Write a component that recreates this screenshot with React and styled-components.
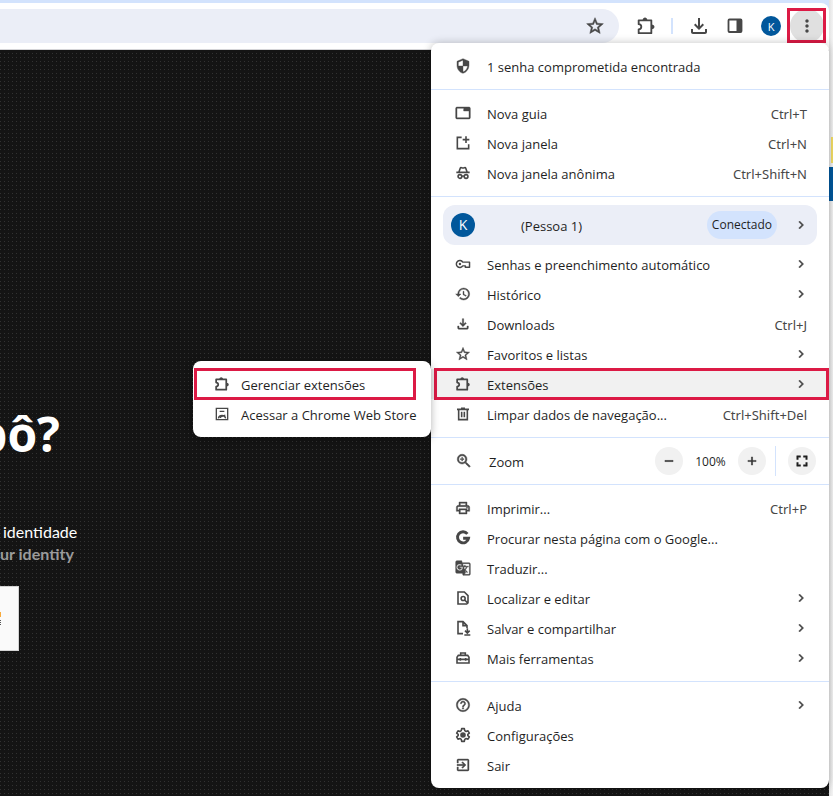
import React from "react";
import styled, { createGlobalStyle, css } from "styled-components";
import {
  MdSecurity,
  MdTab,
  MdHistory,
  MdOutlineFileDownload,
  MdStarBorder,
  MdZoomIn,
  MdOutlinePrint,
  MdGTranslate,
  MdHelpOutline,
  MdExitToApp,
  MdChevronRight,
  MdFullscreen,
  MdAdd,
  MdRemove,
  MdMoreVert,
} from "react-icons/md";

const ink = "#474747";
const marker = "#dc1a45";
const line = "#d3e3fd";

const GlobalStyle = createGlobalStyle`
  * { box-sizing: border-box; }
  body {
    margin: 0;
    font-family: "Open Sans", "Noto Sans", sans-serif;
    background: #fff;
    overflow: hidden;
  }
  button { font: inherit; color: inherit; border: 0; padding: 0; background: none; cursor: pointer; }
  ul { list-style: none; margin: 0; padding: 0; }
  svg { display: block; flex: none; }
  svg path[fill="none"] { stroke: none; }
`;

/* ---------- icons ---------- */

const Stroke = ({ size = 16, width = 2.4, children }) => (
  <svg width={size} height={size} viewBox="0 0 24 24" fill="none" stroke="currentColor" strokeWidth={width} aria-hidden="true">
    {children}
  </svg>
);

const PuzzleIcon = ({ size = 16, width = 2.6 }) => (
  <Stroke size={size} width={width}>
    <path d="M3.2 5.2H18.4V20.6H3.2V16C7.4 15.6 7.4 10.2 3.2 9.8Z" strokeLinejoin="round" />
    <path d="M8 5C8 .8 13.6.8 13.6 5ZM18.5 10.2C23.4 10.2 23.4 15.8 18.5 15.8Z" fill="currentColor" stroke="none" />
  </Stroke>
);

const NewWindowIcon = () => (
  <Stroke>
    <path d="M10 3.5H3.5V20.5H20.5V14M16.5 2V12M11.5 7H21.5" />
  </Stroke>
);

const IncognitoIcon = () => (
  <Stroke>
    <path d="M2 11H22M6 10L8 4.5C8.6 3 10 4.4 12 4.4S15.4 3 16 4.5L18 10M10.5 17Q12 16 13.5 17" />
    <circle cx="7.4" cy="17.2" r="2.8" />
    <circle cx="16.6" cy="17.2" r="2.8" />
  </Stroke>
);

const KeyIcon = () => (
  <Stroke width={2.2}>
    <path d="M11.6 9.2A5.2 5.2 0 1 0 11.6 14.8H15.5V17H21.8V9.2Z" strokeLinejoin="round" />
    <circle cx="7.4" cy="12" r="1.8" fill="currentColor" stroke="none" />
  </Stroke>
);

const TrashIcon = () => (
  <Stroke>
    <path d="M3 5H21M9 3.5H15M5.5 5V20.5H18.5V5M10 8.5V17M14 8.5V17" />
  </Stroke>
);

const GoogleIcon = () => (
  <Stroke width={4.4}>
    <path d="M18.6 5.8A8.3 8.3 0 1 0 20.3 12.3H12.2" />
  </Stroke>
);

const FindIcon = () => (
  <Stroke>
    <path d="M19.5 20V8.5L14 3H4.5V21H18.5M14.5 15L20 20.5" />
    <circle cx="12.2" cy="12.8" r="3" />
  </Stroke>
);

const SaveIcon = () => (
  <Stroke>
    <path d="M12 20.5H4.5V2.5H12L18 8.5V12M12 3V8.5H18" />
    <path d="M18.5 12.5V19M15 16L18.5 19.5L22 16M14 22.5H23" />
  </Stroke>
);

const ToolboxIcon = () => (
  <Stroke>
    <path d="M3 19.5V11L5 8H19L21 11V19.5ZM8.5 8V4.5H15.5V8M3 14H21M8 12V16M16 12V16" />
  </Stroke>
);

const GearIcon = () => (
  <Stroke>
    <path
      strokeLinejoin="round"
      d="M10 2.5H14L14.6 5.5L16.6 6.7L19.5 5.7L21.5 9.2L19.2 11.1V12.9L21.5 14.8L19.5 18.3L16.6 17.3L14.6 18.5L14 21.5H10L9.4 18.5L7.4 17.3L4.5 18.3L2.5 14.8L4.8 12.9V11.1L2.5 9.2L4.5 5.7L7.4 6.7L9.4 5.5Z"
    />
    <circle cx="12" cy="12" r="3" fill="currentColor" />
  </Stroke>
);

const StoreIcon = () => (
  <Stroke width={2}>
    <path d="M3.5 3.5H20.5V20.5H3.5ZM8.5 8H15.5" />
    <path d="M6.5 18.5A5.7 5.7 0 0 1 17.5 18.5M9.5 18A3 3 0 0 1 12 15.5L17 13.5" />
  </Stroke>
);

const PanelIcon = () => (
  <svg width="20" height="20" viewBox="0 0 20 20" aria-hidden="true">
    <rect x="3.5" y="3.5" width="13" height="12.5" rx="1" fill="none" stroke="currentColor" strokeWidth="1.8" />
    <path d="M11.5 3.5H16.5V16H11.5Z" fill="currentColor" />
  </svg>
);

/* ---------- browser frame ---------- */

const Desktop = styled.div`
  display: grid;
  grid-template-columns: minmax(0, 1fr) 4px;
  min-height: 100vh;
`;

const BrowserWindow = styled.div`
  position: relative;
  display: flex;
  flex-direction: column;
  background: ${line};
  padding-top: 3px;
`;

const Toolbar = styled.header`
  display: flex;
  align-items: flex-start;
  height: 47px;
  padding: 6px 5px 0 0;
  background: #fff;
  border-bottom: 1px solid #d5d5d8;
  border-radius: 0 8px 0 0;
  color: ${ink};
`;

const AddressBar = styled.div`
  flex: 1;
  display: flex;
  align-items: center;
  justify-content: flex-end;
  height: 34px;
  padding-right: 14px;
  background: #ebeef7;
  border-radius: 0 17px 17px 0;
  svg { stroke-width: 0.6; }
`;

const ToolbarActions = styled.div`
  display: flex;
  align-items: center;
  height: 34px;
  padding-left: 17px;
`;

const ToolButton = styled.button`
  display: grid;
  place-items: center;
  width: ${(p) => p.$size || 20}px;
  height: ${(p) => p.$size || 20}px;
  margin-right: ${(p) => p.$gap || 0}px;
`;

const ToolbarRule = styled.span`
  width: 2px;
  height: 16px;
  margin-right: 14px;
  background: ${line};
`;

const Avatar = styled.span`
  display: grid;
  place-items: center;
  flex: none;
  width: ${(p) => p.$size}px;
  height: ${(p) => p.$size}px;
  border-radius: 50%;
  background: #01579b;
  color: #fff;
  font-size: ${(p) => (p.$size > 20 ? 14 : 11)}px;
  line-height: 1;
`;

const markedStyle = css`
  position: relative;
  &::after {
    content: "";
    position: absolute;
    border: 3px solid ${marker};
    pointer-events: none;
  }
`;

const MenuButton = styled.button`
  ${markedStyle}
  display: grid;
  place-items: center;
  width: 34px;
  height: 34px;
  border-radius: 50%;
  background: #e0e0e0;
  &::after { inset: -1px -2px 0 -3px; }
`;

/* ---------- page behind the menu ---------- */

const Page = styled.main`
  flex: 1;
  display: flex;
  flex-direction: column;
  align-items: flex-start;
  padding-top: 350px;
  background: conic-gradient(from 270deg at 1px 1px, #323232 90deg, #141414 0) 0 3px / 4px 4px;
  overflow: hidden;
`;

const Title = styled.h1`
  display: flex;
  justify-content: flex-end;
  width: 60px;
  margin: 0 0 53px;
  overflow: hidden;
  color: #fff;
  font: 700 48px/68px "Open Sans", sans-serif;
`;

const Lead = styled.p`
  margin: 0;
  padding-left: ${(p) => (p.$muted ? 0 : 3)}px;
  color: ${(p) => (p.$muted ? "#9b9b9b" : "#fff")};
  font: ${(p) => (p.$muted ? 700 : 400)} 16px/22px Lato, sans-serif;
`;

const Captcha = styled.div`
  display: flex;
  align-items: center;
  width: 19px;
  height: 65px;
  margin-top: 21px;
  background: #fafafa;
  border: 1px solid #d3d3d3;
  border-left: 0;
`;

const SideStrip = styled.aside`
  display: flex;
  flex-direction: column;
  align-items: flex-end;
  padding-top: 137px;
  background: linear-gradient(90deg, #e2e2e2, #f4f4f4);
`;

const StripBlock = styled.span`
  width: ${(p) => p.$width}px;
  height: ${(p) => p.$height}px;
  margin-bottom: 4px;
  background: ${(p) => p.$color};
`;

/* ---------- menu ---------- */

const panel = css`
  position: absolute;
  background: #fff;
  border-radius: 8px;
  color: #1f1f1f;
  font-size: 13px;
  line-height: 20px;
  svg:not([fill="none"]) { stroke-width: 0.6; }
`;

const Menu = styled.nav`
  ${panel}
  top: 43px;
  right: 0;
  width: 398px;
  box-shadow: 0 0 8px rgba(0, 0, 0, 0.24);
`;

const Section = styled.ul`
  padding: 8px 0;
  & + & { border-top: 1px solid ${line}; }
`;

const Entry = styled.li`
  position: relative;
`;

const Row = styled.button`
  display: flex;
  align-items: center;
  gap: 16px;
  width: 100%;
  height: 30px;
  padding: 0 20px 0 24px;
  text-align: left;
  background: ${(p) => (p.$active ? "#f1f1f1" : "none")};
  > svg { color: ${ink}; }
  ${(p) => p.$active && markedStyle}
  &::after { inset: -1px 0 -1px 3px; }
`;

const Label = styled.span`
  flex: 1;
  padding-top: 2px;
  white-space: nowrap;
`;

const Shortcut = styled.kbd`
  padding: 2px 2px 0 0;
  color: ${ink};
  font-family: "Noto Sans", sans-serif;
`;

const Submenu = styled.ul`
  ${panel}
  top: -8px;
  right: 100%;
  width: 238px;
  padding: 8px 0;
  box-shadow: 0 2px 8px rgba(0, 0, 0, 0.3);
`;

const SubRow = styled(Row)`
  gap: 11px;
  padding: 0 16px 0 21px;
  background: none;
  &::after { inset: -1px 15px -1px 1px; }
`;

const Profile = styled.button`
  display: flex;
  align-items: center;
  width: calc(100% - 24px);
  height: 40px;
  margin: 0 12px 4px;
  padding: 0 8px;
  border-radius: 12px;
  background: #ebeef7;
  text-align: left;
  > svg { color: ${ink}; }
`;

const ProfileName = styled(Label)`
  padding-left: 46px;
`;

const Badge = styled.span`
  margin-right: 16px;
  padding: 0 5px;
  border-radius: 14px;
  background: ${line};
  font-size: 12px;
  line-height: 28px;
`;

const ZoomRow = styled.li`
  display: flex;
  align-items: center;
  height: 30px;
  padding: 0 13px 0 24px;
  gap: 16px;
  > svg { color: ${ink}; }
`;

const ZoomControls = styled.div`
  display: flex;
  align-items: center;
`;

const RoundButton = styled.button`
  display: grid;
  place-items: center;
  width: 28px;
  height: 28px;
  border-radius: 50%;
  background: #f1f1f1;
`;

const ZoomValue = styled.output`
  width: 55px;
  padding-top: 2px;
  text-align: center;
  font-size: 12px;
`;

const ZoomRule = styled.span`
  width: 1px;
  height: 30px;
  margin: 0 12px 0 9px;
  background: ${line};
`;

const Chevron = () => <MdChevronRight size={16} />;

const MenuRow = ({ icon, label, shortcut, more, active, children }) => (
  <Entry>
    <Row type="button" $active={active} aria-haspopup={more ? "menu" : undefined}>
      {icon}
      <Label>{label}</Label>
      {shortcut && <Shortcut>{shortcut}</Shortcut>}
      {more && <Chevron />}
    </Row>
    {children}
  </Entry>
);

export default function App() {
  return (
    <>
      <GlobalStyle />
      <Desktop>
        <BrowserWindow>
          <Toolbar>
            <AddressBar>
              <ToolButton aria-label="Favoritar"><MdStarBorder size={20} /></ToolButton>
            </AddressBar>
            <ToolbarActions>
              <ToolButton $gap={15} aria-label="Extensões"><PuzzleIcon size={20} width={2.2} /></ToolButton>
              <ToolbarRule />
              <ToolButton $size={24} $gap={14} aria-label="Downloads"><MdOutlineFileDownload size={24} /></ToolButton>
              <ToolButton $gap={16} aria-label="Painel lateral"><PanelIcon /></ToolButton>
              <ToolButton $gap={9} aria-label="Perfil"><Avatar $size={20}>K</Avatar></ToolButton>
              <MenuButton aria-label="Menu"><MdMoreVert size={20} /></MenuButton>
            </ToolbarActions>
          </Toolbar>
          <Page>
            <Title>bô?</Title>
            <Lead>identidade</Lead>
            <Lead $muted>ur identity</Lead>
            <Captcha>
              <svg width="2" height="18" viewBox="0 0 2 18" aria-hidden="true">
                <path d="M0 2H1V7H0Z" fill="#f9ab3c" />
                <path d="M0 10H1V11H0ZM0 12H1V13H0ZM0 14H1V15H0Z" fill="#555" />
              </svg>
            </Captcha>
          </Page>
          <Menu aria-label="Menu principal">
            <Section>
              <MenuRow icon={<MdSecurity size={16} />} label="1 senha comprometida encontrada" />
            </Section>
            <Section>
              <MenuRow icon={<MdTab size={16} />} label="Nova guia" shortcut="Ctrl+T" />
              <MenuRow icon={<NewWindowIcon />} label="Nova janela" shortcut="Ctrl+N" />
              <MenuRow icon={<IncognitoIcon />} label="Nova janela anônima" shortcut="Ctrl+Shift+N" />
            </Section>
            <Section>
              <Entry>
                <Profile type="button">
                  <Avatar $size={24}>K</Avatar>
                  <ProfileName>(Pessoa 1)</ProfileName>
                  <Badge>Conectado</Badge>
                  <Chevron />
                </Profile>
              </Entry>
              <MenuRow icon={<KeyIcon />} label="Senhas e preenchimento automático" more />
              <MenuRow icon={<MdHistory size={16} />} label="Histórico" more />
              <MenuRow icon={<MdOutlineFileDownload size={16} />} label="Downloads" shortcut="Ctrl+J" />
              <MenuRow icon={<MdStarBorder size={16} />} label="Favoritos e listas" more />
              <MenuRow icon={<PuzzleIcon />} label="Extensões" more active>
                <Submenu>
                  <Entry>
                    <SubRow type="button" $active><PuzzleIcon /><Label>Gerenciar extensões</Label></SubRow>
                  </Entry>
                  <Entry>
                    <SubRow type="button"><StoreIcon /><Label>Acessar a Chrome Web Store</Label></SubRow>
                  </Entry>
                </Submenu>
              </MenuRow>
              <MenuRow icon={<TrashIcon />} label="Limpar dados de navegação..." shortcut="Ctrl+Shift+Del" />
            </Section>
            <Section>
              <ZoomRow>
                <MdZoomIn size={18} />
                <Label>Zoom</Label>
                <ZoomControls>
                  <RoundButton type="button" aria-label="Diminuir zoom"><MdRemove size={14} /></RoundButton>
                  <ZoomValue>100%</ZoomValue>
                  <RoundButton type="button" aria-label="Aumentar zoom"><MdAdd size={14} /></RoundButton>
                  <ZoomRule />
                  <RoundButton type="button" aria-label="Tela cheia"><MdFullscreen size={18} /></RoundButton>
                </ZoomControls>
              </ZoomRow>
            </Section>
            <Section>
              <MenuRow icon={<MdOutlinePrint size={16} />} label="Imprimir..." shortcut="Ctrl+P" />
              <MenuRow icon={<GoogleIcon />} label="Procurar nesta página com o Google..." />
              <MenuRow icon={<MdGTranslate size={16} />} label="Traduzir..." />
              <MenuRow icon={<FindIcon />} label="Localizar e editar" more />
              <MenuRow icon={<SaveIcon />} label="Salvar e compartilhar" more />
              <MenuRow icon={<ToolboxIcon />} label="Mais ferramentas" more />
            </Section>
            <Section>
              <MenuRow icon={<MdHelpOutline size={16} />} label="Ajuda" more />
              <MenuRow icon={<GearIcon />} label="Configurações" />
              <MenuRow icon={<MdExitToApp size={16} />} label="Sair" />
            </Section>
          </Menu>
        </BrowserWindow>
        <SideStrip>
          <StripBlock $width={2} $height={26} $color="#f2dc63" />
          <StripBlock $width={4} $height={34} $color="#01579b" />
        </SideStrip>
      </Desktop>
    </>
  );
}
